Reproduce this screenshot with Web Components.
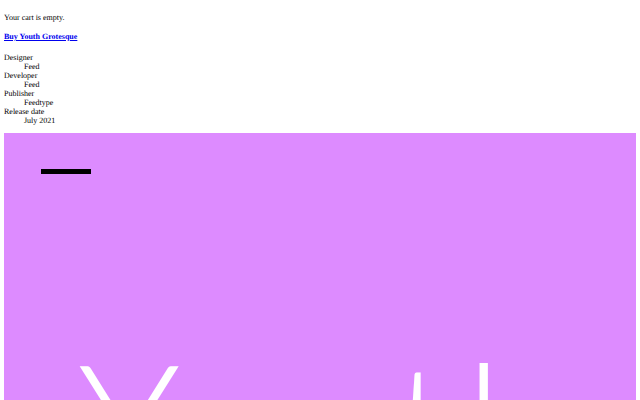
<!DOCTYPE html>
<html>
<head>
<meta charset="utf-8">
<title>Youth Grotesque</title>
<style>
body {
    margin: 4px;
    font: 8px/9px "Liberation Serif", serif;
    text-rendering: geometricPrecision;
    color: #000;
    background: #fff;
}
</style>
</head>
<body>
<cart-status>Your cart is empty.</cart-status>
<buy-link href="#">Buy Youth Grotesque</buy-link>
<font-details>
    <detail-row label="Designer">Feed</detail-row>
    <detail-row label="Developer">Feed</detail-row>
    <detail-row label="Publisher">Feedtype</detail-row>
    <detail-row label="Release date">July 2021</detail-row>
</font-details>
<type-poster>Youth</type-poster>

<script>
class cartStatus extends HTMLElement {
    constructor() {
        super();
        this._shadowRoot = this.attachShadow({mode: "open"})
    }

    connectedCallback() {
        this._shadowRoot.innerHTML = `
            <style>
            :host {
                display: block;
                margin: 9px 0 10px;
            }
            </style>
            <slot></slot>
        `
    }
}

class buyLink extends HTMLElement {
    constructor() {
        super();
        this._shadowRoot = this.attachShadow({mode: "open"})
    }

    connectedCallback() {
        this._shadowRoot.innerHTML = `
            <style>
            :host {
                display: block;
                margin: 0 0 12px;
                font-weight: bold;
            }
            a {
                color: #0000ee;
            }
            </style>
            <a href="${this.getAttribute('href')}"><slot></slot></a>
        `
    }
}

class fontDetails extends HTMLElement {
    constructor() {
        super();
        this._shadowRoot = this.attachShadow({mode: "open"})
    }

    connectedCallback() {
        this._shadowRoot.innerHTML = `
            <style>
            :host {
                display: block;
                margin: 0 0 8px;
            }
            </style>
            <slot></slot>
        `
    }
}

class detailRow extends HTMLElement {
    constructor() {
        super();
        this._shadowRoot = this.attachShadow({mode: "open"})
    }

    connectedCallback() {
        this._shadowRoot.innerHTML = `
            <style>
            :host {
                display: block;
            }
            div {
                padding-left: 20px;
            }
            </style>
            ${this.getAttribute('label')}
            <div><slot></slot></div>
        `
    }
}

class typePoster extends HTMLElement {
    constructor() {
        super();
        this._shadowRoot = this.attachShadow({mode: "open"})
    }

    connectedCallback() {
        this._shadowRoot.innerHTML = `
            <style>
            :host {
                display: block;
                height: 632px;
                padding: 36px 0 0 37px;
                box-sizing: border-box;
                overflow: hidden;
                background: #dd8bff;
                color: #fff;
            }
            .bar {
                width: 50px;
                height: 5px;
                background: #000;
            }
            .name {
                margin: 145px 0 0 37px;
                font: 300 172px/1.2 Lato, sans-serif;
                letter-spacing: 13.5px;
                white-space: nowrap;
            }
            </style>
            <div class="bar"></div>
            <div class="name"><slot></slot></div>
        `
    }
}

window.customElements.define('cart-status', cartStatus)
window.customElements.define('buy-link', buyLink)
window.customElements.define('font-details', fontDetails)
window.customElements.define('detail-row', detailRow)
window.customElements.define('type-poster', typePoster)
</script>
</body>
</html>
